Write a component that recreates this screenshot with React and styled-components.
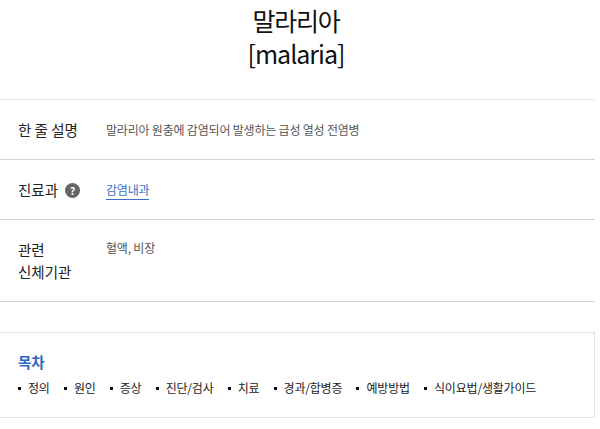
import React from "react";
import styled, { createGlobalStyle } from "styled-components";

const GlobalStyle = createGlobalStyle`
  html, body {
    margin: 0;
    padding: 0;
    background: #fff;
    overflow: hidden;
  }
  body {
    font-family: "Noto Sans CJK KR", "Noto Sans", sans-serif;
    color: #111;
  }
`;

const tocItems = [
  "정의",
  "원인",
  "증상",
  "진단/검사",
  "치료",
  "경과/합병증",
  "예방방법",
  "식이요법/생활가이드",
];

function App() {
  return (
    <Page>
      <GlobalStyle />
      <Title>
        <TitleLine>말라리아</TitleLine>
        <TitleLine $latin>[malaria]</TitleLine>
      </Title>
      <InfoList>
        <InfoRow $height={60} $first>
          <Label>한 줄 설명</Label>
          <Value>말라리아 원충에 감염되어 발생하는 급성 열성 전염병</Value>
        </InfoRow>
        <InfoRow $height={60}>
          <Label>
            진료과
            <HelpIcon>?</HelpIcon>
          </Label>
          <Value>
            <DeptLink>감염내과</DeptLink>
          </Value>
        </InfoRow>
        <InfoRow $height={82} $top>
          <Label>
            관련
            <br />
            신체기관
          </Label>
          <Value>혈액, 비장</Value>
        </InfoRow>
      </InfoList>
      <TocBox>
        <TocTitle>목차</TocTitle>
        <TocList>
          {tocItems.map((item) => (
            <TocItem key={item}>{item}</TocItem>
          ))}
        </TocList>
      </TocBox>
    </Page>
  );
}

const Page = styled.div`
  width: 595px;
  height: 429px;
  overflow: hidden;
`;

const Title = styled.h1`
  margin: 0;
  height: 99px;
  padding: 4px 3px 0 0;
  box-sizing: border-box;
  text-align: center;
  font-weight: 400;
  font-size: 25px;
  line-height: 33px;
  color: #111;
`;

const TitleLine = styled.div`
  letter-spacing: ${(p) => (p.$latin ? "-1px" : "-1.2px")};
`;

const InfoList = styled.div`
  display: flex;
  flex-direction: column;
  border-bottom: 1px solid #d2d2d2;
`;

const InfoRow = styled.div`
  display: flex;
  align-items: ${(p) => (p.$top ? "flex-start" : "center")};
  padding-top: ${(p) => (p.$top ? "19px" : "0")};
  height: ${(p) => (p.$top ? p.$height - 20 : p.$height - 1)}px;
  border-top: 1px solid ${(p) => (p.$first ? "#e8e8e8" : "#d2d2d2")};
`;

const Label = styled.div`
  display: flex;
  flex-wrap: wrap;
  align-items: center;
  width: 88px;
  padding-left: 18px;
  flex: none;
  font-size: 14.5px;
  line-height: 22px;
  color: #222;
`;

const HelpIcon = styled.span`
  display: inline-flex;
  align-items: center;
  justify-content: center;
  width: 15px;
  height: 15px;
  margin: 1px 0 0 7px;
  border-radius: 50%;
  background: #666;
  color: #fff;
  font-size: 10px;
  font-weight: 700;
  line-height: 15px;
`;

const Value = styled.div`
  font-size: 12px;
  line-height: 18px;
  letter-spacing: -0.2px;
  color: #555;
`;

const DeptLink = styled.span`
  color: #3a6fc4;
  border-bottom: 1px solid #3a6fc4;
  padding-bottom: 1px;
`;

const TocBox = styled.div`
  margin-top: 30px;
  height: 86px;
  box-sizing: border-box;
  padding: 19px 18px 0;
  border: 1px solid #e0e0e0;
  border-left: 0;
  border-bottom-color: #e8e8e8;
`;

const TocTitle = styled.div`
  font-size: 14.5px;
  line-height: 20px;
  font-weight: 700;
  color: #2b66c0;
`;

const TocList = styled.ul`
  display: flex;
  gap: 14.2px;
  margin: 7px 0 0;
  padding: 0;
  list-style: none;
`;

const TocItem = styled.li`
  display: flex;
  align-items: center;
  gap: 7px;
  font-size: 12px;
  line-height: 18px;
  letter-spacing: -0.2px;
  color: #222;
  &::before {
    content: "";
    width: 3px;
    height: 3px;
    background: #111;
  }
`;

export default App;
